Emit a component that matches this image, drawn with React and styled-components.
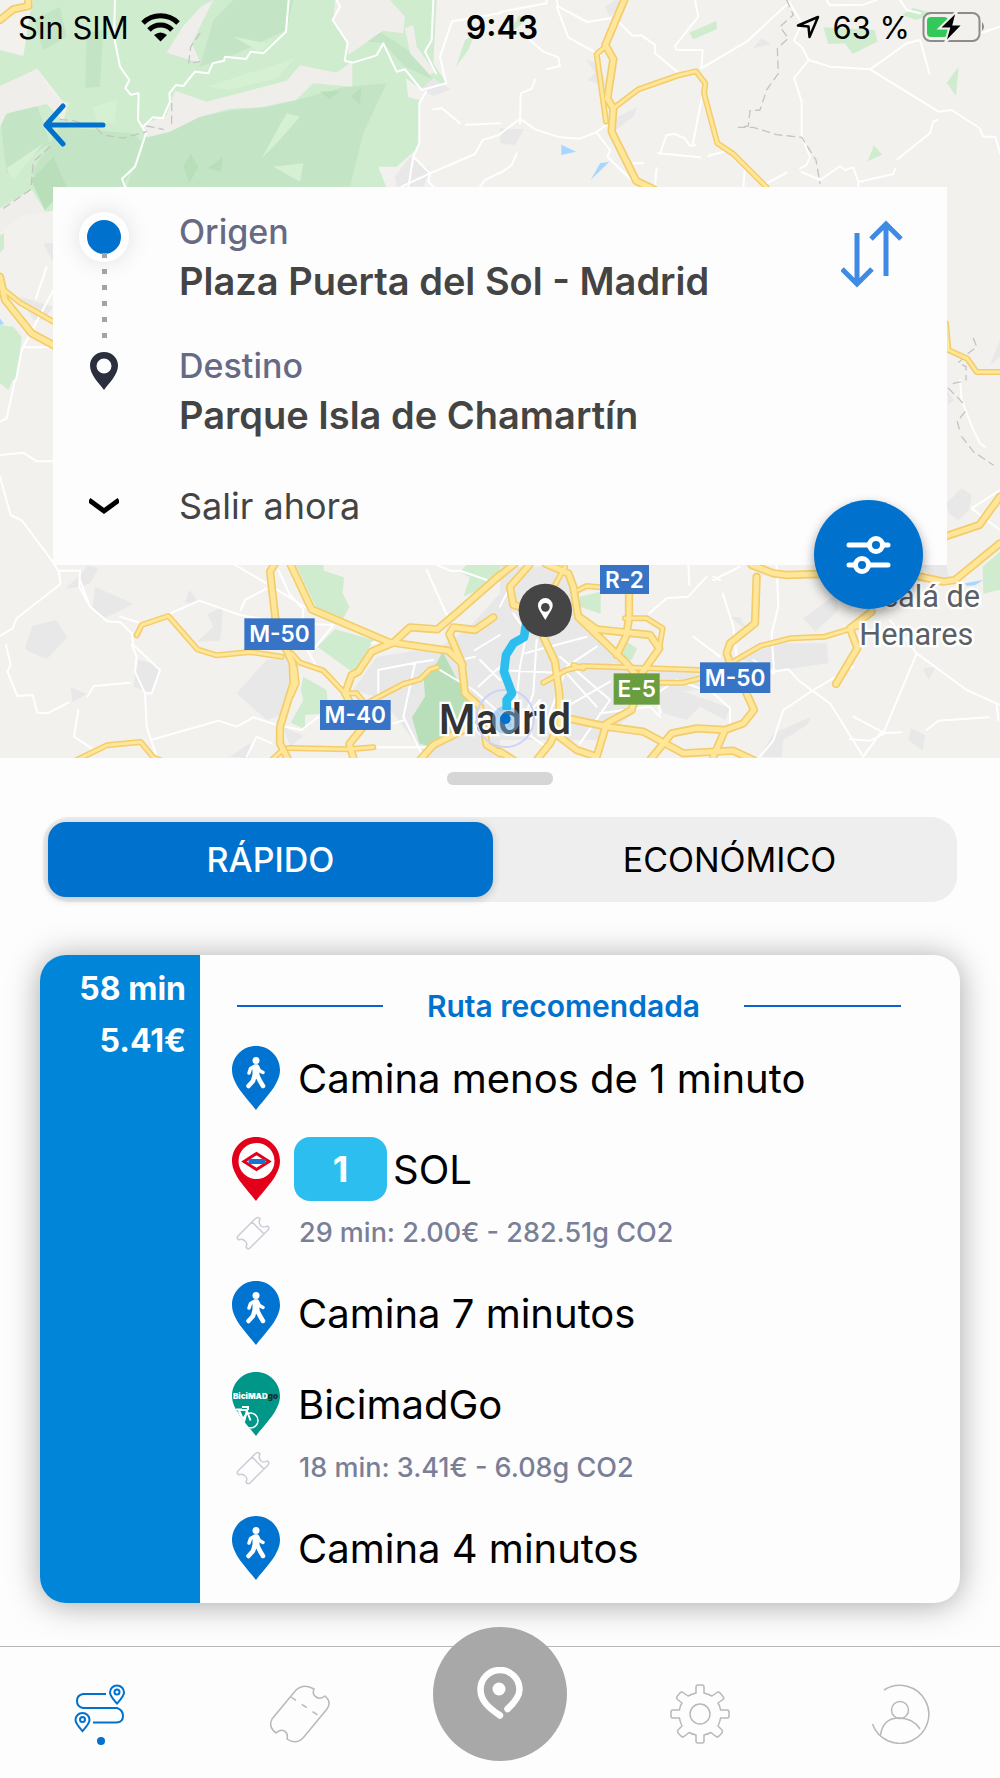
import React, { useState } from 'react';
import styled, { createGlobalStyle } from 'styled-components';

const BLUE = '#0072ce';

/* ---------- map data, 3 units per pixel, split in four tiles ---------- */

const tiles = [
    {
        id: 'nw', x: 0, y: 0,
        green: [
            'M90 40L100 0H1310L1300 190L1340 250L1262 268L1218 235L1225 292L1258 300V440L1190 500L1135 500L1160 565L165 600L158 632L135 635L93 568L0 630V345L110 312L185 300L112 206L0 262V150L70 168Z',
            'M0 705L12 700V745L0 760ZM0 975L40 980L65 1010L60 1060L48 1140H0Z',
            'M1395 120L1425 100L1405 150L1368 200Z'
        ],
        shade: [
            'M260 100L310 90L300 260L256 265ZM600 350L700 330L800 322L890 300L1030 262L1160 250L1090 400L1050 560H380L430 410Z',
            'M0 350L110 312L150 430L20 520ZM180 380L400 400L430 430L370 560H160L93 520Z',
            'M640 60L700 0H880L860 90L690 170L600 200ZM1060 120L1140 95L1240 160L1300 240L1215 200L1150 130ZM100 60L180 20L200 110L130 150Z'
        ],
        darkShade: ['M550 500L572 460L595 500L568 550ZM622 505L668 472L664 515ZM960 275L1022 272L990 298ZM1052 290L1084 262L1080 312ZM93 540L160 470L200 560L135 630Z'],
        lightShade: ['M620 260L885 175L830 235L690 270ZM785 475L860 340L900 350L830 430ZM20 505L130 430L40 540ZM280 320L350 300L345 370L290 365ZM820 500L910 490L900 545ZM700 110L800 130L830 110L780 155Z'],
        land: [
            'M605 18L640 0L575 130L602 190L500 158L548 80Z',
            'M525 272L620 305L860 242L900 196L1010 218L1057 184V260L940 250L888 300L782 322L690 326L600 350L510 395L442 412L425 375L500 345Z',
            'M1005 0H1170L1215 50L1210 100L1148 92L1045 165L1040 118L1000 60Z',
            'M1215 85L1240 75L1250 140L1305 215L1290 225L1230 160ZM0 258L112 206L165 290L205 310L190 362L140 312L20 340L0 380ZM0 625L95 568L135 635L60 650L0 700Z'
        ],
        gray: ['M1262 268L1300 235L1352 268L1300 288ZM1185 530L1230 470L1290 510L1270 560H1190ZM60 890L160 920L130 960L100 960ZM130 730H160V790Z'],
        water: ['M0 955L12 972L0 975Z'],
        white: [
            'M345 0L342 110L360 200L388 240L376 264L392 284L416 280L414 360L438 400L405 500L366 536L376 562',
            'M866 0L858 95L790 160L752 155L738 177L675 170L672 182L638 190L625 220L585 215L550 258L528 255L508 280L510 305L488 355L458 352L430 380',
            'M1010 0L1020 20L998 60L1043 128L1034 182L1058 188L1130 166L1150 130L1190 215L1215 208L1265 270L1338 250L1320 170L1356 64L1500 40',
            'M1278 275L1258 310V430L1240 470L1290 520L1425 462L1448 420L1500 404M1240 470L1225 560M1205 560L1290 520L1285 545L1300 560M1300 0L1295 120L1275 155L1308 220M1300 328L1326 325L1380 370M1398 374L1500 370M1440 560L1455 540L1500 518',
            'M160 870L65 1050L48 1140M140 800L108 895M75 1042H160'
        ],
        dash: ['M600 100L572 140L566 190L600 185M515 310V370M180 358L220 362L290 385L310 405L370 414L440 395M440 378L490 388M150 440L100 485L95 540L93 568L0 632'],
        major: ['M0 830L15 900L95 1000L165 1038', 'M0 60L40 28L85 18V0'],
        minor: ['M0 860L60 908L165 968']
    },
    {
        id: 'ne', x: 1500, y: 0,
        green: ['M28 103L56 46L82 56ZM568 98L650 62V88L580 118ZM970 82L1125 90L1132 125L1058 162L1035 130L985 132ZM1340 248L1376 200L1368 288ZM1103 484L1122 436L1147 464ZM1205 45L1240 24L1300 40L1250 60Z'],
        gray: ['M315 20L345 0L370 5L330 50ZM258 176L300 195L320 260L262 240L285 220ZM335 360L412 320L400 350L345 392ZM758 145L785 115L815 132ZM0 385L72 388L45 435L0 430ZM1470 1095L1500 1020V1070Z'],
        water: ['M184 434L228 455L184 465ZM272 540L300 490L328 485Z'],
        white: [
            'M0 36L140 10V0M170 0L175 20L262 66L330 55M170 20L205 112L300 165M360 70L398 108L425 106L465 135V160L540 222M585 0L595 50L525 138L530 150H608L604 205M604 205L740 125L870 5',
            'M870 10L905 70L882 122L905 140L926 180L990 200L1110 208L1220 130L1260 120M1110 208L1316 335L1355 330L1438 384L1450 410H1486L1500 460M1260 120L1288 220M1440 100L1500 80M980 0L990 16L1090 14L1130 0M1200 0L1220 30L1260 40',
            'M0 402L60 356L105 388L180 412L240 416L290 396L325 370M60 370L62 280L95 266L105 240M290 398L330 450L322 470L400 545M400 490H430M470 505L465 560M608 280L578 435M480 460L500 405L525 402L555 415L570 438L585 435M475 460L600 472M625 468L680 452M735 500L730 560M800 550L860 518M926 180L882 235L905 305V410L930 470L920 495L900 505M905 516L960 540L1020 498L1035 510L1060 502L1075 546L1180 522L1186 505M1075 546V560M1192 478L1290 400L1300 364L1312 360M0 520L35 495L50 460M90 120L130 155L175 172L180 198L140 208'
        ],
        dash: ['M860 0L880 45L840 80L865 115L832 145L835 220L800 270L780 330L750 332L745 378L715 382H760L830 404L905 412L948 480L960 550M1420 1015L1430 1040L1405 1060L1375 1088L1398 1100V1140'],
        major: ['M375 -5L316 135L340 178L322 295L340 325L335 395L408 542L465 570'],
        minor: ['M316 140L290 162L318 365', 'M340 325L415 268L535 226L588 214L616 250L612 280L652 430L700 462L800 562', 'M1338 970L1345 1050L1402 1076L1430 1116H1500']
    },
    {
        id: 'sw', x: 0, y: 1140,
        green: [
            'M885 550H970L972 572L1032 592L1028 640L1048 680L1030 715L950 685ZM952 800L1005 748L1122 780L1060 878ZM910 890L980 930L985 1000L915 1005V1048L872 1028L910 960L902 930ZM1380 575L1405 550H1500V575L1445 625L1390 650L1410 592ZM0 0H38L25 30L0 10ZM1220 935L1275 900V950L1230 945Z'
        ],
        darkShade: ['M1310 850L1328 815L1372 900L1410 940L1420 1050L1290 1100L1258 1090L1236 1012L1275 950L1270 880Z'],
        gray: [
            'M285 620L400 672L315 714L278 684ZM75 800L98 738L168 720L202 772L140 838L78 810ZM555 668L568 630L598 668ZM622 702L668 680L665 740L660 782L592 785L640 740ZM400 920L415 840L475 855V880L455 940ZM212 922L260 942L218 966ZM710 940L800 840L870 830L860 1000L800 1020ZM690 1130L752 1088L745 1135ZM245 580L262 555L295 565L270 610L240 620L195 626Z',
            'M1060 930L1130 830L1320 800L1400 750L1500 640V1135H1280L1180 1000L1130 950ZM850 1040L910 1068L870 1100Z'
        ],
        white: [
            'M0 290L32 405L66 422L162 550L176 575L182 612L50 715L38 745L0 768M176 572H240L238 620L270 680L322 724L360 726L395 760L400 795L480 870L455 940H435L405 875L410 830L395 795M0 225L70 218L110 244H162M45 0L20 115L0 125M240 600L270 680M360 710L440 735M435 940L440 1040L470 1130M18 795L32 855L22 875L52 948L98 945L112 998L142 1000L205 968M262 950L282 918L390 908M235 990L222 1070L275 1105M460 1078L655 1022L710 1040L760 1012L830 1035L905 1050L955 1010',
            'M500 705L598 662L720 705L860 730L1000 735M705 555L800 610L930 690M835 570L870 645L910 688L905 780L950 860L1040 925M722 690L735 660L800 625M935 815L1000 735M1280 570L1345 715M1310 555L1350 572H1380L1460 600M1115 790L1200 770M1135 945V870L1245 848L1300 840M1245 850L1210 1010L1270 1130M1180 1030L1215 1020M1320 870L1420 930L1500 1000M1425 810L1500 765M1378 840L1425 830M1440 840L1500 900M740 1130L770 1070L815 1090M1110 1102H1290M1435 920L1500 860'
        ],
        major: [
            'M825 550L810 575L828 730L855 800L878 850L880 910L840 1040V1090L865 1140',
            'M870 550L935 688L1165 786L1345 812L1385 850L1395 940L1440 980L1460 1095L1500 1120',
            'M1500 585L1375 695L1312 748L1230 742L1180 788L1115 815L1075 875L1055 885L1035 940L1090 1040L1048 1092L1062 1140',
            'M1480 712L1425 750L1360 742L1348 762L1388 855',
            'M1260 1140L1300 1095L1420 1035'
        ],
        minor: [
            'M410 766L425 735L505 708L592 808L650 826L750 816L845 830',
            'M875 820L900 848L970 872L1035 940M1035 940H1070L1090 965',
            'M1090 975L1210 912L1260 898L1290 868L1312 862',
            'M865 1104L1045 1108L1120 1102M815 1140L850 1108',
            'M230 1140L320 1096L422 1086L460 1132L480 1140',
            'M885 860L890 910L875 945'
        ]
    },
    {
        id: 'se', x: 1500, y: 1140,
        green: ['M240 650L302 635V702L240 680ZM345 830L375 782L412 805L395 840ZM1448 560L1500 515V630L1472 635L1450 642ZM0 550H40L0 590Z'],
        gray: [
            'M0 560H190L240 700L380 860L600 870V930L440 940L400 1000L300 1080H0ZM470 940L540 930L690 985L675 1020L600 980L560 1020L490 1000ZM910 715L1010 640L1015 690L945 755ZM700 830L850 790L980 790L985 850L840 870L760 850ZM1340 370L1385 325L1415 345L1408 390L1375 420L1345 400ZM820 1060L935 1010L920 1035L850 1080L845 1130H780ZM1225 1080L1232 1045L1275 1065L1268 1112ZM1268 865L1308 862L1285 900ZM690 710L720 712L742 752ZM1270 555H1340L1345 590L1290 600Z',
            'M1340 30L1362 60L1345 75Z'
        ],
        water: ['M1395 610L1450 600L1425 616L1400 618Z'],
        white: [
            'M620 590L565 650L500 655L448 700M640 600L720 560M830 555L835 680L815 760L822 880L760 840M565 555L568 615M668 640L700 740L712 850M660 600L640 590M580 770L660 830M820 875L865 868L900 905L990 970L1090 1130M1150 1060L1250 820L1170 720M1090 1130L1140 1060L1205 1057M1250 820L1400 930L1500 975M1050 1078L1110 1082L1155 1060L1060 1010M1280 1050L1315 1022L1465 1012M780 1130L820 1082L850 990L940 930L1060 860M1500 330L1415 385L1500 450M1380 0L1385 60L1420 150L1440 190L1455 200M1490 975L1495 1020',
            'M40 700L80 760L60 860L50 960M110 780L100 940L60 1050M0 870L200 880L290 980M75 820L260 770M20 640L0 680M180 830L330 960L240 1090M330 905L200 980M290 800L200 860L150 1000M0 1000L150 1110M40 1050L120 960M300 1000L450 980L480 1010M480 1000L470 940L530 900L640 940L690 985L690 1040'
        ],
        dash: ['M1360 10L1385 5M1345 25L1395 75M1395 95L1372 125L1380 155M1385 170L1420 215L1480 255'],
        major: [
            'M-5 590L45 550', 'M60 680L40 675L30 620L88 555',
            'M135 550L205 580L220 620L235 712L380 850L420 900L395 990L320 1030L290 1130',
            'M240 712L290 748L450 765L478 805L425 880', 'M387 640V715L378 770L350 825',
            'M130 770L165 845L178 940L180 1060', 'M180 1010L320 1040L430 1055L550 1120L700 1112L760 1140',
            'M450 1140L515 1060L590 1045L675 1050L730 1030L762 990L735 930',
            'M755 555L820 580L860 585L960 582M770 590L765 730L690 790L680 820L690 850M675 1050L640 1130',
            'M1260 590L1330 605L1365 600L1500 490M1340 468L1438 435L1500 350',
            'M1115 695L1050 745L1072 805L1008 912M0 1115L40 1140M110 1140L150 1090L165 1060L230 1110L290 1130'
        ],
        minor: [
            'M130 908L200 870L250 858L600 870M220 855L250 865', 'M480 908H550L600 895',
            'M700 845L780 798L870 775L975 770L1090 735', 'M375 715H440L488 745L478 805', 'M195 560L165 615M235 630L260 618L300 622'
        ]
    }
];

const shields = [
    { text: 'M-50', x: 733, y: 1855, w: 211, h: 95 },
    { text: 'M-40', x: 960, y: 2100, w: 212, h: 90 },
    { text: 'R-2', x: 1800, y: 1695, w: 147, h: 87 },
    { text: 'M-50', x: 2100, y: 1987, w: 211, h: 92 },
    { text: 'E-5', x: 1841, y: 2020, w: 138, h: 94, green: true }
];

const layers = [
    ['green', { fill: '#cfeccf' }],
    ['shade', { fill: '#c4e5c5' }],
    ['lightShade', { fill: '#d6f0d4' }],
    ['land', { fill: '#f0eeeb' }],
    ['gray', { fill: '#e8e8e8' }],
    ['darkShade', { fill: '#b8dfb9' }],
    ['water', { fill: '#a6d8ff' }],
    ['white', { stroke: '#ffffff', strokeWidth: 6 }],
    ['dash', { stroke: '#c4c4c4', strokeWidth: 4, strokeDasharray: '22 16' }],
    ['minor', { stroke: '#f3cd6b', strokeWidth: 18 }],
    ['major', { stroke: '#f3cd6b', strokeWidth: 25 }],
    ['minor', { stroke: '#ffe699', strokeWidth: 9 }],
    ['major', { stroke: '#ffe699', strokeWidth: 15 }]
];

const MapDrawing = () => (
    <MapSvg viewBox="0 0 3000 2274" preserveAspectRatio="xMidYMid slice" role="img" aria-label="Mapa de Madrid">
        <rect width="3000" height="2274" fill="#f3f1ee" />
        {layers.map(([key, paint], i) => (
            <g key={i} fill="none" strokeLinejoin="round" strokeLinecap="round" {...paint}>
                {tiles.map(tile => tile[key] && (
                    <path key={tile.id} transform={`translate(${tile.x} ${tile.y})`} d={tile[key].join('')} />
                ))}
            </g>
        ))}
        {shields.map(s => (
            <g key={s.text + s.x}>
                <rect x={s.x} y={s.y} width={s.w} height={s.h} fill={s.green ? '#6a9d3f' : '#3874c5'} />
                <Shield x={s.x + s.w / 2} y={s.y + s.h / 2 + 24}>{s.text}</Shield>
            </g>
        ))}
        <Place x="2752" y="1822">Alcalá de</Place>
        <Place x="2749" y="1936">Henares</Place>
        <City x="1515" y="2202">Madrid</City>
        <circle cx="1516" cy="2155" r="86" fill="none" stroke="#ccd3f7" strokeWidth="6" />
        <circle cx="1518" cy="2160" r="42" fill="#6fb1e6" opacity="0.5" />
        <circle cx="1516" cy="2156" r="16" fill={BLUE} />
        <path d="M1580 1860L1572 1912L1540 1930L1518 1965L1512 2015L1536 2080L1520 2100V2130" fill="none" stroke="#2dbef0" strokeWidth="26" strokeLinejoin="round" />
        <circle cx="1636" cy="1831" r="80" fill="#454545" />
        <path d="M1636 1860C1622 1836 1614 1828 1614 1816A22 22 0 0 1 1658 1816C1658 1828 1650 1836 1636 1860Z" fill="#fff" />
        <circle cx="1636" cy="1822" r="13" fill="#454545" />
    </MapSvg>
);

/* ---------- icons ---------- */

const WifiIcon = () => (
    <svg width="39" height="29" viewBox="0 0 39 29" fill="none" stroke="#000" strokeWidth="5">
        <path d="M2 10A25 25 0 0 1 37 10" />
        <path d="M8 17A16 16 0 0 1 31 17" />
        <path d="M13 22Q19.500 17 26 22L19.500 28.500Z" fill="#000" stroke="none" />
    </svg>
);

const LocationIcon = () => (
    <svg width="24" height="24" viewBox="0 0 24 24" fill="none" stroke="#000" strokeWidth="2.500" strokeLinejoin="round">
        <path d="M2 10.500L22 2L13.500 22L12.500 11.500Z" />
    </svg>
);

const BatteryIcon = () => (
    <svg width="64" height="32" viewBox="0 0 64 32">
        <rect x="1.500" y="2" width="56" height="28" rx="7" fill="none" stroke="#8c8c8c" strokeWidth="2" />
        <rect x="5" y="6" width="21" height="20" rx="4" fill="#34c759" />
        <path d="M60 11Q64 15.500 60 20Z" fill="#8c8c8c" />
        <path d="M35 0L17 17.500H27L23 32L41 13.500H31.500Z" fill="#000" stroke="#f3f1ee" strokeWidth="2" />
    </svg>
);

const BackIcon = () => (
    <svg width="64" height="44" viewBox="0 0 64 44" fill="none" stroke={BLUE} strokeWidth="5" strokeLinecap="round" strokeLinejoin="round">
        <path d="M20 3L3 22L20 41M3 22H60" />
    </svg>
);

const SwapIcon = () => (
    <svg width="62" height="68" viewBox="0 0 62 68" fill="none" stroke="#3f8ae2" strokeWidth="5">
        <path d="M16 13V64M1 49L16 64L31 49M45 56V4M30 19L45 4L60 19" />
    </svg>
);

const PlaceIcon = () => (
    <svg width="28" height="38" viewBox="0 0 28 38">
        <path d="M14 0C6 0 0 6 0 13.500C0 23 9 31 14 38C19 31 28 23 28 13.500C28 6 22 0 14 0ZM14 6.500A7.500 7.500 0 0 1 14 21.500A7.500 7.500 0 0 1 14 6.500Z" fill="#2a2e3d" />
    </svg>
);

const ChevronIcon = () => (
    <svg width="30" height="18" viewBox="0 0 30 18" fill="none" stroke="#000" strokeWidth="5">
        <path d="M0 3L15 14L30 3" />
    </svg>
);

const FilterIcon = () => (
    <svg width="46" height="38" viewBox="0 0 46 38" fill={BLUE} stroke="#fff" strokeWidth="5" strokeLinecap="round">
        <path d="M3 9H42M3 29H42" />
        <circle cx="30" cy="9" r="6.500" />
        <circle cx="16" cy="29" r="6.500" />
    </svg>
);

const PIN = 'M24 0C10.700 0 0 10.500 0 24C0 38 14 51 24 64C34 51 48 38 48 24C48 10.500 37.300 0 24 0Z';

const WalkPin = () => (
    <svg width="48" height="64" viewBox="0 0 48 64">
        <path d={PIN} fill="#0074d0" />
        <circle cx="24" cy="14.500" r="3.500" fill="#fff" />
        <path d="M24 22V29" stroke="#fff" strokeWidth="7" strokeLinecap="round" />
        <g fill="none" stroke="#fff" strokeWidth="3.500" strokeLinecap="round" strokeLinejoin="round">
            <path d="M23 20L18.500 22.500L17 27M25 20L27.500 24.500L31 26.500" />
            <path d="M22.500 30L21 35L16.500 40M25.500 30L28 35L31 40" strokeWidth="4.500" />
        </g>
    </svg>
);

const MetroPin = () => (
    <svg width="48" height="64" viewBox="0 0 48 64">
        <path d={PIN} fill="#e2001a" />
        <circle cx="24.500" cy="24" r="18" fill="#fff" />
        <path d="M12 24.500L24.500 16.500L37 24.500L24.500 32.500Z" fill="#fff" stroke="#e2001a" strokeWidth="3" />
        <rect x="16.500" y="22" width="17" height="5" fill="#1574cf" />
    </svg>
);

const BikePin = () => (
    <svg width="48" height="64" viewBox="0 0 48 64">
        <clipPath id="bike-pin"><path d={PIN} /></clipPath>
        <g clipPath="url(#bike-pin)">
            <rect width="48" height="64" fill="#009688" />
            <PinLabel x="1" y="27">BiciMAD<tspan fill="#12302e">go</tspan></PinLabel>
            <g fill="none" stroke="#fff" strokeWidth="1.500">
                <circle cx="18.500" cy="48.500" r="7.500" />
                <circle cx="1" cy="46" r="7.500" />
                <path d="M4 37.500H10M7 38L12 50L15 38H6M10 35H16V38M15 39L18.500 48.500" strokeWidth="2" />
            </g>
        </g>
    </svg>
);

const SmallTicketIcon = () => (
    <svg width="34" height="34" viewBox="0 0 34 34" fill="none" stroke="#cbcbd8" strokeWidth="1.500" strokeLinejoin="round">
        <path d="M19 3Q22 0 24 3Q22 7 25 10Q28 12 31 10Q34 11 32 14L14 32Q12 34 10 31Q12 27 9 25Q6 22 3 24Q0 22 2 20ZM16 6L28 18" />
    </svg>
);

const RouteIcon = () => (
    <svg width="52" height="62" viewBox="0 0 52 62" fill="none" stroke={BLUE} strokeWidth="2">
        <path d="M32 10H9Q3 11 3 17T9 24H43Q49 26 49 32T43 38.500H19" />
        <path d="M43 19.500C39 15 36 12 36 8.500A7 7 0 0 1 50 8.500C50 12 47 15 43 19.500Z" />
        <circle cx="43" cy="8" r="2.500" />
        <path d="M8.500 47C4.500 42.500 1.500 39.500 1.500 36A7 7 0 0 1 15.500 36C15.500 39.500 12.500 42.500 8.500 47Z" />
        <circle cx="8.500" cy="35.500" r="2.500" />
        <circle cx="27" cy="57" r="4" fill={BLUE} stroke="none" />
    </svg>
);

const TicketIcon = () => (
    <svg width="62" height="60" viewBox="0 0 62 60" fill="none" stroke="#b8b8b8" strokeWidth="1.500">
        <path d="M27 6Q35 -1 45 5C42 12 50 17 56 12Q63 18 58 25L34 54Q27 61 18 55C20 48 13 43 7 49Q-1 43 3 35Z" />
        <path d="M22 13L50 32" strokeDasharray="6 7" />
    </svg>
);

const HereIcon = () => (
    <svg width="46" height="54" viewBox="0 0 46 54" fill="none" stroke="#fff" strokeWidth="6.500" strokeLinecap="round">
        <path d="M23 48.500C12 41 3.500 34 3.500 22.500A19.500 19.500 0 0 1 42.500 22.500C42.500 30 37 36 30.500 42" />
        <circle cx="22" cy="22" r="6.500" fill="#fff" stroke="none" />
    </svg>
);

const GearIcon = () => (
    <svg width="60" height="60" viewBox="0 0 60 60" fill="none" stroke="#b8b8b8" strokeWidth="1.500" strokeLinejoin="round">
        <path d="M26 3Q26 1 28 1H32Q34 1 34 3V9Q38 10 42 12L47 8.500Q49 7.500 50 9L53 12.500Q54.500 14 53 15.500L48 19Q50 22 50.500 26H57Q59 26 59 28V32Q59 34 57 34H50.500Q50 38 48 42L52 46Q53 47.500 52 49L49 52Q48 53.500 46 52.500L41 48.500Q38 50 34 51V57Q34 59 32 59H28Q26 59 26 57V51Q22 50 19 48.500L14 52.500Q12 53.500 11 52L8 49Q7 47.500 8 46L12 42Q10 38 9.500 34H3Q1 34 1 32V28Q1 26 3 26H9.500Q10 22 12 19L7.500 15.500Q6 14 7 12.500L10 9Q11 7.500 13 8.500L18 12Q22 10 26 9Z" />
        <circle cx="30" cy="30" r="10" />
    </svg>
);

const UserIcon = () => (
    <svg width="60" height="60" viewBox="0 0 60 60" fill="none" stroke="#b8b8b8" strokeWidth="1.500">
        <path d="M14 6A29 29 0 1 1 2.500 40" />
        <circle cx="30" cy="26" r="8.500" />
        <path d="M10.500 51Q13 34 29 34Q43 34 50 45" />
    </svg>
);

/* ---------- screen ---------- */

const pins = { walk: WalkPin, metro: MetroPin, bike: BikePin };

const steps = [
    { kind: 'walk', text: 'Camina menos de 1 minuto' },
    { kind: 'metro', line: '1', text: 'SOL', detail: '29 min: 2.00€ - 282.51g CO2' },
    { kind: 'walk', text: 'Camina 7 minutos' },
    { kind: 'bike', text: 'BicimadGo', detail: '18 min: 3.41€ - 6.08g CO2' },
    { kind: 'walk', text: 'Camina 4 minutos' }
];

const StatusBar = () => (
    <Status>
        <StatusSide>Sin SIM <WifiIcon /></StatusSide>
        <Clock>9:43</Clock>
        <StatusSide $end><LocationIcon /> 63 % <BatteryIcon /></StatusSide>
    </Status>
);

const SearchCard = () => (
    <Search>
        <Track>
            <OriginDot />
            <Dots />
            <PlaceIcon />
        </Track>
        <Stops>
            <div>
                <StopLabel>Origen</StopLabel>
                <StopName>Plaza Puerta del Sol - Madrid</StopName>
            </div>
            <div>
                <StopLabel>Destino</StopLabel>
                <StopName>Parque Isla de Chamartín</StopName>
            </div>
        </Stops>
        <SwapButton aria-label="Intercambiar origen y destino"><SwapIcon /></SwapButton>
        <DepartLabel htmlFor="depart" aria-label="Hora de salida"><ChevronIcon /></DepartLabel>
        <Depart id="depart">
            <option>Salir ahora</option>
        </Depart>
        <FilterButton aria-label="Filtros"><FilterIcon /></FilterButton>
    </Search>
);

const Step = ({ step }) => {
    const Pin = pins[step.kind];
    return (
        <li>
            <StepLine>
                <Pin />
                {step.line && <LineBadge>{step.line}</LineBadge>}
                <StepText $tight={!!step.line}>{step.text}</StepText>
            </StepLine>
            {step.detail && (
                <Detail>
                    <SmallTicketIcon />
                    <span>{step.detail}</span>
                </Detail>
            )}
        </li>
    );
};

const App = () => {
    const [tab, setTab] = useState('rapido');
    return (
        <Screen>
            <GlobalStyle />
            <MapHeader>
                <MapDrawing />
                <StatusBar />
                <BackButton aria-label="Volver"><BackIcon /></BackButton>
                <SearchCard />
            </MapHeader>
            <Sheet>
                <Handle />
                <Tabs role="tablist">
                    <Tab role="tab" aria-selected={tab === 'rapido'} $active={tab === 'rapido'} onClick={() => setTab('rapido')}>RÁPIDO</Tab>
                    <Tab role="tab" aria-selected={tab === 'economico'} $active={tab === 'economico'} onClick={() => setTab('economico')}>ECONÓMICO</Tab>
                </Tabs>
                <Route>
                    <Totals>
                        <span>58 min</span>
                        <span>5.41€</span>
                    </Totals>
                    <RouteBody>
                        <RouteTitle>Ruta recomendada</RouteTitle>
                        <Steps>
                            {steps.map(step => <Step key={step.text} step={step} />)}
                        </Steps>
                    </RouteBody>
                </Route>
            </Sheet>
            <Nav>
                <NavItem href="#rutas" aria-label="Rutas"><RouteIcon /></NavItem>
                <NavItem href="#billetes" aria-label="Billetes"><TicketIcon /></NavItem>
                <NavMain href="#mapa" aria-label="Mapa"><HereIcon /></NavMain>
                <NavItem href="#ajustes" aria-label="Ajustes"><GearIcon /></NavItem>
                <NavItem href="#perfil" aria-label="Perfil"><UserIcon /></NavItem>
            </Nav>
        </Screen>
    );
};

const GlobalStyle = createGlobalStyle`
    *{
        box-sizing: border-box;
    }
    body{
        margin: 0;
        background: #fdfdfd;
        font-family: Inter, "Liberation Sans", sans-serif;
    }
    button, select{
        font-family: inherit;
        border: none;
        background: none;
        padding: 0;
        cursor: pointer;
    }
    svg{
        display: block;
        flex: none;
    }
`;

const Screen = styled.div`
    display: flex;
    flex-direction: column;
    min-height: 100vh;
`;

const MapHeader = styled.header`
    position: relative;
    padding-bottom: 193px;
`;

const MapSvg = styled.svg`
    position: absolute;
    inset: 0;
    width: 100%;
    height: 100%;
    z-index: -1;
`;

const Shield = styled.text`
    font-size: 68px;
    font-weight: 600;
    fill: #fff;
    text-anchor: middle;
`;

const Place = styled.text`
    font-size: 92px;
    font-family: Roboto, sans-serif;
    fill: #5a6066;
    stroke: #fff;
    stroke-width: 14px;
    paint-order: stroke;
    text-anchor: middle;
`;

const City = styled(Place)`
    font-size: 126px;
    font-weight: 500;
    fill: #333;
`;

const PinLabel = styled.text`
    font-size: 8px;
    font-weight: 900;
    fill: #fff;
`;

const Status = styled.div`
    display: grid;
    grid-template-columns: 1fr auto 1fr;
    align-items: center;
    height: 54px;
    padding: 0 14px 0 18px;
    font-size: 31px;
    color: #000;
`;

const StatusSide = styled.div`
    display: flex;
    align-items: center;
    gap: 12px;
    justify-content: ${props => props.$end ? 'flex-end' : 'flex-start'};
`;

const Clock = styled.span`
    font-size: 32px;
    font-weight: 600;
`;

const BackButton = styled.button`
    display: block;
    margin: 49px 0 40px 43px;
`;

const Search = styled.section`
    position: relative;
    display: grid;
    grid-template-columns: 50px 1fr auto;
    column-gap: 50px;
    margin: 0 53px;
    padding: 25px 44px 37px 26px;
    background: #fdfdfd;
`;

const Track = styled.div`
    display: flex;
    flex-direction: column;
    align-items: center;
`;

const OriginDot = styled.span`
    width: 50px;
    height: 50px;
    border: 8px solid #fff;
    border-radius: 50%;
    background: ${BLUE};
    box-shadow: 0 0 24px rgba(0, 0, 0, 0.12);
`;

const Dots = styled.span`
    z-index: 1;
    width: 5px;
    height: 85px;
    margin: -9px 0 14px;
    background: repeating-linear-gradient(#a3a3a3 0 5px, transparent 5px 16px);
`;

const Stops = styled.div`
    display: flex;
    flex-direction: column;
    gap: 36px;
`;

const StopLabel = styled.div`
    font-size: 34px;
    line-height: 40px;
    font-weight: 500;
    color: #666a85;
`;

const StopName = styled.div`
    font-size: 38px;
    line-height: 58px;
    font-weight: 600;
    color: #444;
    white-space: nowrap;
`;

const SwapButton = styled.button`
    align-self: start;
    margin-top: 8px;
`;

const DepartLabel = styled.label`
    display: grid;
    place-items: center;
    margin-top: 40px;
`;

const Depart = styled.select`
    appearance: none;
    justify-self: start;
    margin-top: 40px;
    height: 44px;
    font-size: 36px;
    color: #444;
`;

const FilterButton = styled.button`
    position: absolute;
    right: 24px;
    bottom: -44px;
    display: grid;
    place-items: center;
    width: 109px;
    height: 109px;
    border-radius: 50%;
    background: ${BLUE};
    box-shadow: 0 5px 12px rgba(0, 0, 0, 0.4);
`;

const Sheet = styled.main`
    flex: 1;
    padding: 14px 40px 43px;
    overflow: hidden;
`;

const Handle = styled.div`
    width: 106px;
    height: 13px;
    margin: 0 auto;
    border-radius: 6px;
    background: #d6d6d6;
`;

const Tabs = styled.div`
    display: grid;
    grid-template-columns: 1fr 1fr;
    gap: 14px;
    margin: 32px 3px 53px;
    padding: 5px;
    border-radius: 26px;
    background: #eee;
`;

const Tab = styled.button`
    height: 75px;
    border-radius: 18px;
    font-size: 34px;
    font-weight: ${props => props.$active ? 500 : 400};
    color: ${props => props.$active ? '#fff' : '#000'};
    background: ${props => props.$active ? BLUE : 'transparent'};
    box-shadow: ${props => props.$active ? '0 2px 8px rgba(0, 0, 0, 0.2)' : 'none'};
`;

const Route = styled.article`
    display: grid;
    grid-template-columns: 160px 1fr;
    border-radius: 26px;
    background: #fdfdfd;
    box-shadow: 0 2px 32px rgba(0, 0, 0, 0.34);
`;

const Totals = styled.div`
    display: flex;
    flex-direction: column;
    align-items: flex-end;
    padding: 8px 14px;
    border-radius: 26px 0 0 26px;
    background: #0085d8;
    color: #fff;
    font-size: 32px;
    line-height: 52px;
    font-weight: 700;
`;

const RouteBody = styled.div`
    padding: 33px 32px 23px;
`;

const RouteTitle = styled.h2`
    display: flex;
    align-items: center;
    gap: 44px;
    margin: 0 27px 22px 5px;
    font-size: 30px;
    line-height: 36px;
    font-weight: 600;
    color: ${BLUE};
    white-space: nowrap;
    &::before, &::after{
        content: "";
        flex: 145px 1 1;
        height: 2px;
        background: #0a62d0;
    }
    &::after{
        flex-basis: 156px;
    }
`;

const Steps = styled.ol`
    display: flex;
    flex-direction: column;
    gap: 27px;
    margin: 0;
    padding: 0;
    list-style: none;
`;

const StepLine = styled.div`
    display: flex;
    align-items: center;
    height: 64px;
`;

const LineBadge = styled.span`
    display: grid;
    place-items: center;
    width: 93px;
    height: 64px;
    margin-left: 14px;
    border-radius: 16px;
    background: #2dbef0;
    color: #fff;
    font-size: 36px;
    font-weight: 700;
`;

const StepText = styled.span`
    margin-left: ${props => props.$tight ? '6px' : '18px'};
    font-size: 40px;
    color: #000;
`;

const Detail = styled.div`
    display: flex;
    align-items: center;
    gap: 29px;
    height: 53px;
    padding: 10px 0 0 4px;
    font-size: 27px;
    font-weight: 500;
    color: #7a7f98;
`;

const Nav = styled.nav`
    position: relative;
    display: grid;
    grid-template-columns: repeat(5, 1fr);
    height: 132px;
    border-top: 1px solid #b8b8b8;
    background: #fdfdfd;
`;

const NavItem = styled.a`
    display: grid;
    place-items: start center;
    padding-top: 37px;
`;

const NavMain = styled.a`
    display: grid;
    place-items: center;
    justify-self: center;
    width: 134px;
    height: 134px;
    margin-top: -20px;
    border-radius: 50%;
    background: #a8a8a8;
`;

export default App;
